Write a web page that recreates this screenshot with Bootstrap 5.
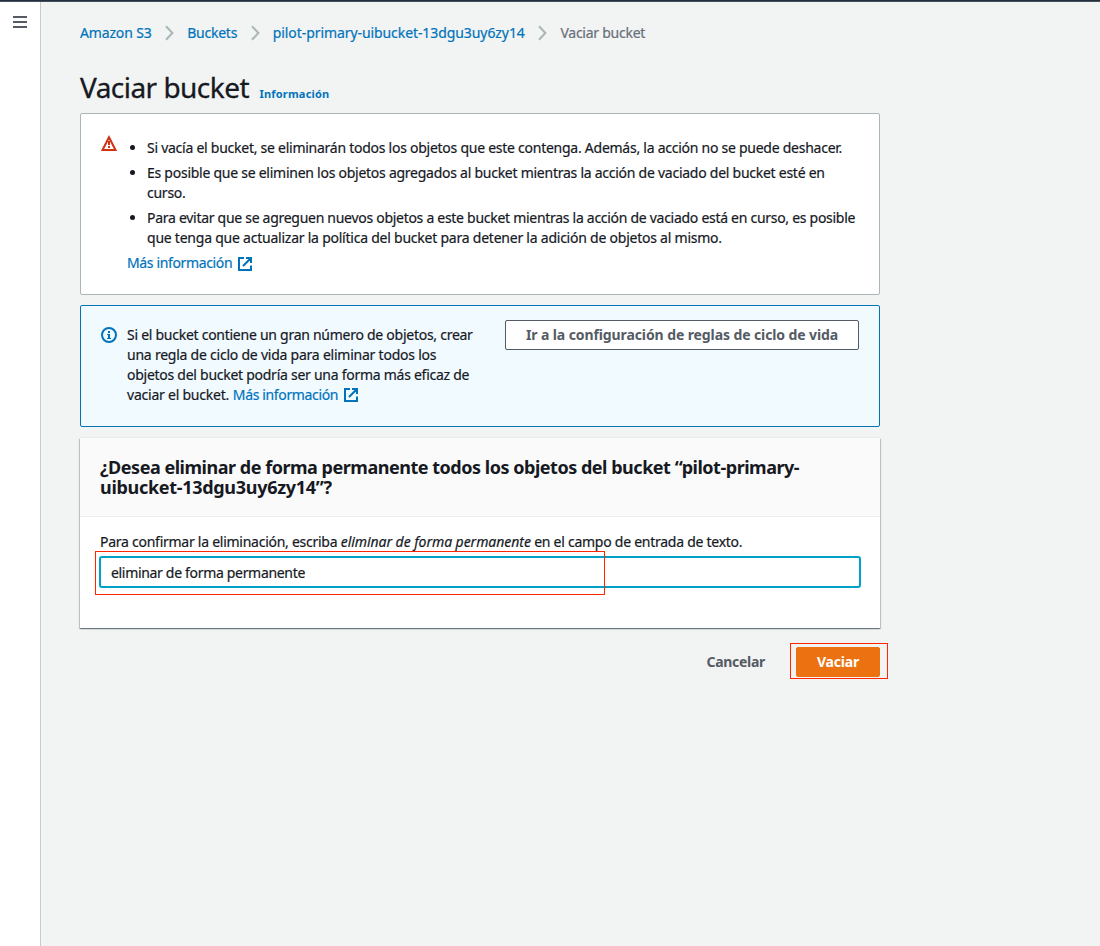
<!DOCTYPE html>
<html lang="es">
<head>
<meta charset="utf-8">
<meta name="viewport" content="width=device-width, initial-scale=1">
<title>Vaciar bucket</title>
<link href="https://cdn.jsdelivr.net/npm/bootstrap@5.3.0/dist/css/bootstrap.min.css" rel="stylesheet">
<style>
  body { background: #f2f3f3; color: #16191f; font: 14px/20px "Noto Sans", "Open Sans", sans-serif; letter-spacing: -.256px; -webkit-text-stroke: .2px; }
  a { color: #0073bb; text-decoration: none; }
  svg { display: block; flex: none; }
  .top-strip { height: 2px; background: #232f3e; border-bottom: 1px solid #444f5c; }
  .side-rail { width: 41px; border-right: 1px solid #c6cccc; padding: 14px 0 0 13px; }
  .page-main { padding: 21px 0 0 39px; }
  .panel-col { width: 800px; }
  .crumb-first { letter-spacing: -.15px; }
  .crumb-bucket { letter-spacing: -.08px; }
  .crumb-sep { margin: 0 13px 0 13.7px; }
  .crumb-now { color: #687078; }
  .title-row { padding-top: 26px; }
  .page-title { font-size: 28px; line-height: 36px; letter-spacing: -.54px; font-weight: 400; -webkit-text-stroke: .3px; }
  .info-link { font-size: 11px; font-weight: 700; letter-spacing: .2px; margin-left: 10.5px; -webkit-text-stroke: 0; }
  .flash { border: 1px solid #aab7b8; border-radius: 2px; padding: 0 20px; }
  .flash-warn { height: 182px; margin-top: 8px; }
  .flash-info { height: 122px; margin-top: 10px; background: #f1faff; border-color: #0073bb; }
  .flash-icon { margin-top: 21px; }
  .flash-text { margin-left: 10px; padding-top: 19px; white-space: nowrap; }
  .flash-text ul { padding-left: 20px; margin: 5px 0; }
  .flash-text li + li { margin-top: 5px; }
  .line-tight { letter-spacing: -.285px; }
  .line-loose { letter-spacing: -.232px; }
  .flash-info .flash-text { letter-spacing: -.265px; }
  .flash-info .line-loose { letter-spacing: -.23px; }
  .flash .more-link { display: inline-flex; letter-spacing: -.36px; }
  .more-link svg { margin: 4px 0 0 6px; }
  .flash-info .more-link { margin-left: .5px; }
  .flash-info .more-link svg { margin-top: 3px; }
  .btn-plain { height: 30px; padding: 4px 20px; border: 1px solid #545b64; border-radius: 2px; background: #fff; color: #545b64; font-size: 14px; line-height: 20px; font-weight: 700; letter-spacing: -.1px; -webkit-text-stroke: 0; }
  .btn-life { width: 354px; margin-top: 14px; padding: 4px 0; white-space: nowrap; }
  .btn-quiet { border-color: transparent; background: transparent; letter-spacing: -.3px; margin-right: 10px; }
  .btn-go { width: 84px; padding: 4px 0; background: #ec7211; border-color: #ec7211; color: #fff; letter-spacing: -.2px; }
  .confirm-box { height: 190px; margin-top: 11px; background: #fff; box-shadow: 0 1px 1px 0 rgba(0,28,36,.35), 1px 1px 1px 0 rgba(0,28,36,.18), -1px 1px 1px 0 rgba(0,28,36,.18), 0 -1px 0 0 #eaeded; }
  .confirm-head { height: 79px; background: #fafafa; border-bottom: 1px solid #eaeded; padding: 19px 20px; }
  .confirm-head h2 { font-size: 18px; line-height: 20px; font-weight: 700; letter-spacing: -.475px; white-space: nowrap; margin: 0; -webkit-text-stroke: 0; }
  .second-line { letter-spacing: -.3px; }
  .confirm-body { padding: 15px 19px 0; }
  .confirm-body label { padding-left: 1px; letter-spacing: -.26px; }
  .confirm-body em { letter-spacing: -.05px; }
  .confirm-input { height: 32px; border: 2px solid #00a1c9; border-radius: 3px; padding: 1px 10px 0; font-size: 14px; color: #16191f; letter-spacing: -.32px; }
  .mark-red { position: absolute; border: 1px solid #ff2600; pointer-events: none; }
  .mark-input { left: -4px; top: -5px; width: 510px; height: 44px; }
  .mark-go { left: -6px; top: -4px; width: 98px; height: 36px; }
  .actions-row { margin-top: 19px; }
</style>
</head>
<body>
<svg width="0" height="0" class="position-absolute" aria-hidden="true">
  <symbol id="ext" viewBox="0 0 14 14"><path d="M6 1H1v12h12V8.500M8 1h5v5M12.500 1.500 5 9" fill="none" stroke="currentColor" stroke-width="2"/></symbol>
  <symbol id="chev" viewBox="0 0 9 16"><path d="M1 1.200 7.400 8 1 14.800" fill="none" stroke="#aab7b8" stroke-width="2"/></symbol>
</svg>
<div class="d-flex flex-column vh-100 overflow-hidden">
  <div class="top-strip flex-shrink-0"></div>
  <div class="d-flex flex-grow-1">
    <aside class="side-rail bg-white flex-shrink-0">
      <svg width="14" height="12" viewBox="0 0 14 12"><path d="M0 1h14M0 6h14M0 11h14" stroke="#545b64" stroke-width="2"/></svg>
    </aside>
    <main class="page-main">
      <nav class="d-flex align-items-center" aria-label="Ruta">
        <a href="#" class="crumb-first">Amazon S3</a>
        <svg class="crumb-sep" width="9" height="16"><use href="#chev"/></svg>
        <a href="#">Buckets</a>
        <svg class="crumb-sep" width="9" height="16"><use href="#chev"/></svg>
        <a href="#" class="crumb-bucket">pilot-primary-uibucket-13dgu3uy6zy14</a>
        <svg class="crumb-sep" width="9" height="16"><use href="#chev"/></svg>
        <span class="crumb-now">Vaciar bucket</span>
      </nav>
      <div class="panel-col">
        <div class="title-row d-flex align-items-baseline">
          <h1 class="page-title m-0">Vaciar bucket</h1>
          <a href="#" class="info-link">Información</a>
        </div>
        <section class="flash flash-warn bg-white d-flex">
          <svg class="flash-icon" width="16" height="16" viewBox="0 0 16 16"><path d="M8 2.200 14.500 15H1.500Z" fill="none" stroke="#d13212" stroke-width="2"/><path d="M8 6v4M8 11v2" stroke="#d13212" stroke-width="2"/></svg>
          <div class="flash-text">
            <ul>
              <li>Si vacía el bucket, se eliminarán todos los objetos que este contenga. Además, la acción no se puede deshacer.</li>
              <li>Es posible que se eliminen los objetos agregados al bucket mientras la acción de vaciado del bucket esté en<br>curso.</li>
              <li><span class="line-tight">Para evitar que se agreguen nuevos objetos a este bucket mientras la acción de vaciado está en curso, es posible</span><br><span class="line-loose">que tenga que actualizar la política del bucket para detener la adición de objetos al mismo.</span></li>
            </ul>
            <a href="#" class="more-link">Más información<svg width="14" height="14"><use href="#ext"/></svg></a>
          </div>
        </section>
        <section class="flash flash-info d-flex align-items-start">
          <svg class="flash-icon" width="16" height="16" viewBox="0 0 16 16"><circle cx="8" cy="8" r="7" fill="none" stroke="#0073bb" stroke-width="2"/><path d="M7 4h2v2H7ZM6 7h3v4h1v1H6v-1h1V8H6Z" fill="#0073bb"/></svg>
          <div class="flash-text">Si el bucket contiene un gran número de objetos, crear<br><span class="line-loose">una regla de ciclo de vida para eliminar todos los</span><br>objetos del bucket podría ser una forma más eficaz de<br><span class="line-loose">vaciar el bucket.</span> <a href="#" class="more-link">Más información<svg width="14" height="14"><use href="#ext"/></svg></a></div>
          <button class="btn btn-plain btn-life ms-auto">Ir a la configuración de reglas de ciclo de vida</button>
        </section>
        <section class="confirm-box">
          <div class="confirm-head"><h2>¿Desea eliminar de forma permanente todos los objetos del bucket “pilot-primary-<br><span class="second-line">uibucket-13dgu3uy6zy14”?</span></h2></div>
          <div class="confirm-body">
            <label for="confirm" class="d-block">Para confirmar la eliminación, escriba <em>eliminar de forma permanente</em> en el campo de entrada de texto.</label>
            <div class="position-relative mt-1">
              <input id="confirm" class="form-control confirm-input" value="eliminar de forma permanente">
              <span class="mark-red mark-input"></span>
            </div>
          </div>
        </section>
        <div class="actions-row d-flex justify-content-end">
          <button class="btn btn-plain btn-quiet">Cancelar</button>
          <div class="position-relative">
            <button class="btn btn-plain btn-go">Vaciar</button>
            <span class="mark-red mark-go"></span>
          </div>
        </div>
      </div>
    </main>
  </div>
</div>
</body>
</html>
